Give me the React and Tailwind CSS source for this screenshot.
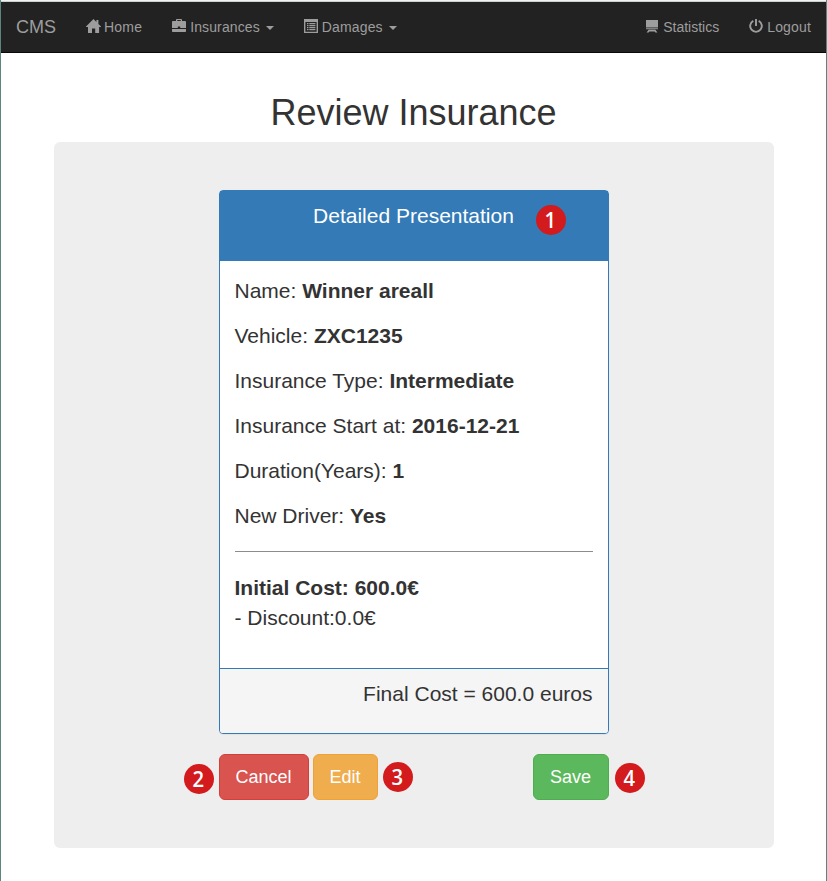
function HomeIcon() {
  return (
    <svg className="mr-[3px] h-[14px] w-[15px] shrink-0 -translate-y-[1px]" viewBox="0 0 15 14" fill="currentColor">
      <path d="M7.5 0 10.4 2.9V1h2v3.9L15 7.5V8h-1.9v6H9.2V9.4H6V14H2V8H0v-.5z" />
    </svg>
  );
}

function BriefcaseIcon() {
  return (
    <svg className="mr-[4px] h-[14px] w-[14px] shrink-0 -translate-y-[1px]" viewBox="0 0 14 14" fill="currentColor">
      <path d="M0 10h14v2.3q0 .7-.7.7H.7q-.7 0-.7-.7z" />
      <path d="M4 2V1Q4 0 5 0h4q1 0 1 1v1h3.1q.9 0 .9.9V9H8.2V7.4H5.8V9H0V2.9Q0 2 .9 2zM5.3 2h3.4V1H5.3z" />
    </svg>
  );
}

function ListIcon() {
  return (
    <svg className="mr-[3px] h-[14px] w-[14px] shrink-0 -translate-y-[1px]" viewBox="0 0 14 14" fill="currentColor">
      <path fillRule="evenodd" d="M0 0h14v14H0zM1.4 3v9.8h11.2V3z" />
      <path d="M3 4h1.5v1.3H3zM5.3 4H11.4v1.3H5.3zM3 6h1.5v1.3H3zM5.3 6H11.4v1.3H5.3zM3 8h1.5v1.3H3zM5.3 8H11.4v1.3H5.3zM3 10h1.5v1.3H3zM5.3 10H11.4v1.3H5.3z" />
    </svg>
  );
}

function BlackboardIcon() {
  return (
    <svg className="mr-[4px] h-[14px] w-[14px] shrink-0 -translate-y-[1px]" viewBox="0 0 14 14" fill="currentColor">
      <path d="M1 1h12v7.6H1zM1 9.3h12v1H1zM3.6 10.8h6.8l2 2.7h-2l-.8-1H4.4l-.8 1h-2z" />
    </svg>
  );
}

function PowerIcon() {
  return (
    <svg className="mr-[4px] h-[14px] w-[14px] shrink-0 -translate-y-[1px]" viewBox="0 0 14 14" fill="none" stroke="currentColor" strokeWidth="1.9">
      <path d="M4.3 1.9a5.8 5.8 0 1 0 5.4 0M7 0v7" />
    </svg>
  );
}

function Caret() {
  return (
    <span className="ml-[6px] mt-[2px] inline-block border-x-4 border-t-4 border-x-transparent border-t-[#9d9d9d]" />
  );
}

function Marker({ n, className }) {
  return (
    <span
      className={`absolute flex h-[30px] w-[30px] items-center justify-center rounded-full bg-[#d31a1c] pb-[2px] font-['Open_Sans',sans-serif] text-[22px] font-semibold leading-[28px] text-white ${className}`}
    >
      <span className="scale-x-[0.92]">{n}</span>
    </span>
  );
}

const details = [
  ["Name", "Winner areall"],
  ["Vehicle", "ZXC1235"],
  ["Insurance Type", "Intermediate"],
  ["Insurance Start at", "2016-12-21"],
  ["Duration(Years)", "1"],
  ["New Driver", "Yes"],
];

export default function App() {
  return (
    <div className="h-[881px] w-[827px] overflow-hidden border-x border-[#5c8580] bg-white font-['Liberation_Sans',Arial,sans-serif] text-[#333]">
      <div className="h-px bg-[#f1f2f2]" />
      <div className="h-px bg-[#c9d2d1]" />
      <nav className="flex h-[51px] items-center justify-between border-b border-[#080808] bg-[#222] px-[15px] text-[14px] leading-5 text-[#9d9d9d]">
        <div className="flex items-center">
          <a className="mr-[30px] text-[18px]">CMS</a>
          <a className="mr-[30px] flex items-center"><HomeIcon /><span className="tracking-[0.2px]">Home</span></a>
          <a className="mr-[30px] flex items-center"><BriefcaseIcon /><span className="tracking-[0.12px]">Insurances</span><Caret /></a>
          <a className="flex items-center"><ListIcon /><span className="ml-px tracking-[0.14px]">Damages</span><Caret /></a>
        </div>
        <div className="flex items-center">
          <a className="mr-[30px] flex items-center"><BlackboardIcon />Statistics</a>
          <a className="flex items-center"><PowerIcon /><span className="tracking-[0.16px]">Logout</span></a>
        </div>
      </nav>
      <h2 className="mt-[40px] text-center text-[36px] font-medium leading-[40px]">Review Insurance</h2>
      <main className="mx-auto mt-[9px] h-[706px] w-[720px] rounded-md bg-[#eee] px-[165px] pt-[48px] text-[21px] leading-[30px]">
        <section className="h-[544px] rounded border border-[#337ab7] bg-white shadow-[0_1px_1px_rgba(0,0,0,0.05)]">
          <header className="relative h-[70px] bg-[#337ab7] pt-[10px] text-center text-white">
            Detailed Presentation
            <Marker n="1" className="left-[316px] top-[14px]" />
          </header>
          <div className="h-[407px] px-[15px] pt-[15px]">
            {details.map(([label, value]) => (
              <p key={label} className="mb-[15px]">
                {label}: <b>{value}</b>
              </p>
            ))}
            <hr className="mb-[21px] mt-[20px] border-t border-[#8c8c8c]" />
            <p><b>Initial Cost: 600.0€</b></p>
            <p>- Discount:0.0€</p>
          </div>
          <footer className="h-[65px] rounded-b-[3px] border-t border-[#337ab7] bg-[#f5f5f5] px-[15px] pt-[10px] text-right">
            Final Cost = 600.0 euros
          </footer>
        </section>
        <div className="relative mt-[20px] flex gap-[4px] text-[18px] leading-6 text-white">
          <button className="h-[46px] w-[90px] rounded-md border border-[#d43f3a] bg-[#d9534f]">Cancel</button>
          <button className="h-[46px] w-[65px] rounded-md border border-[#eea236] bg-[#f0ad4e]">Edit</button>
          <button className="ml-auto h-[46px] w-[76px] rounded-md border border-[#4cae4c] bg-[#5cb85c]">Save</button>
          <Marker n="2" className="left-[-35px] top-[10px]" />
          <Marker n="3" className="left-[164px] top-[8px]" />
          <Marker n="4" className="left-[396px] top-[9px]" />
        </div>
      </main>
    </div>
  );
}
